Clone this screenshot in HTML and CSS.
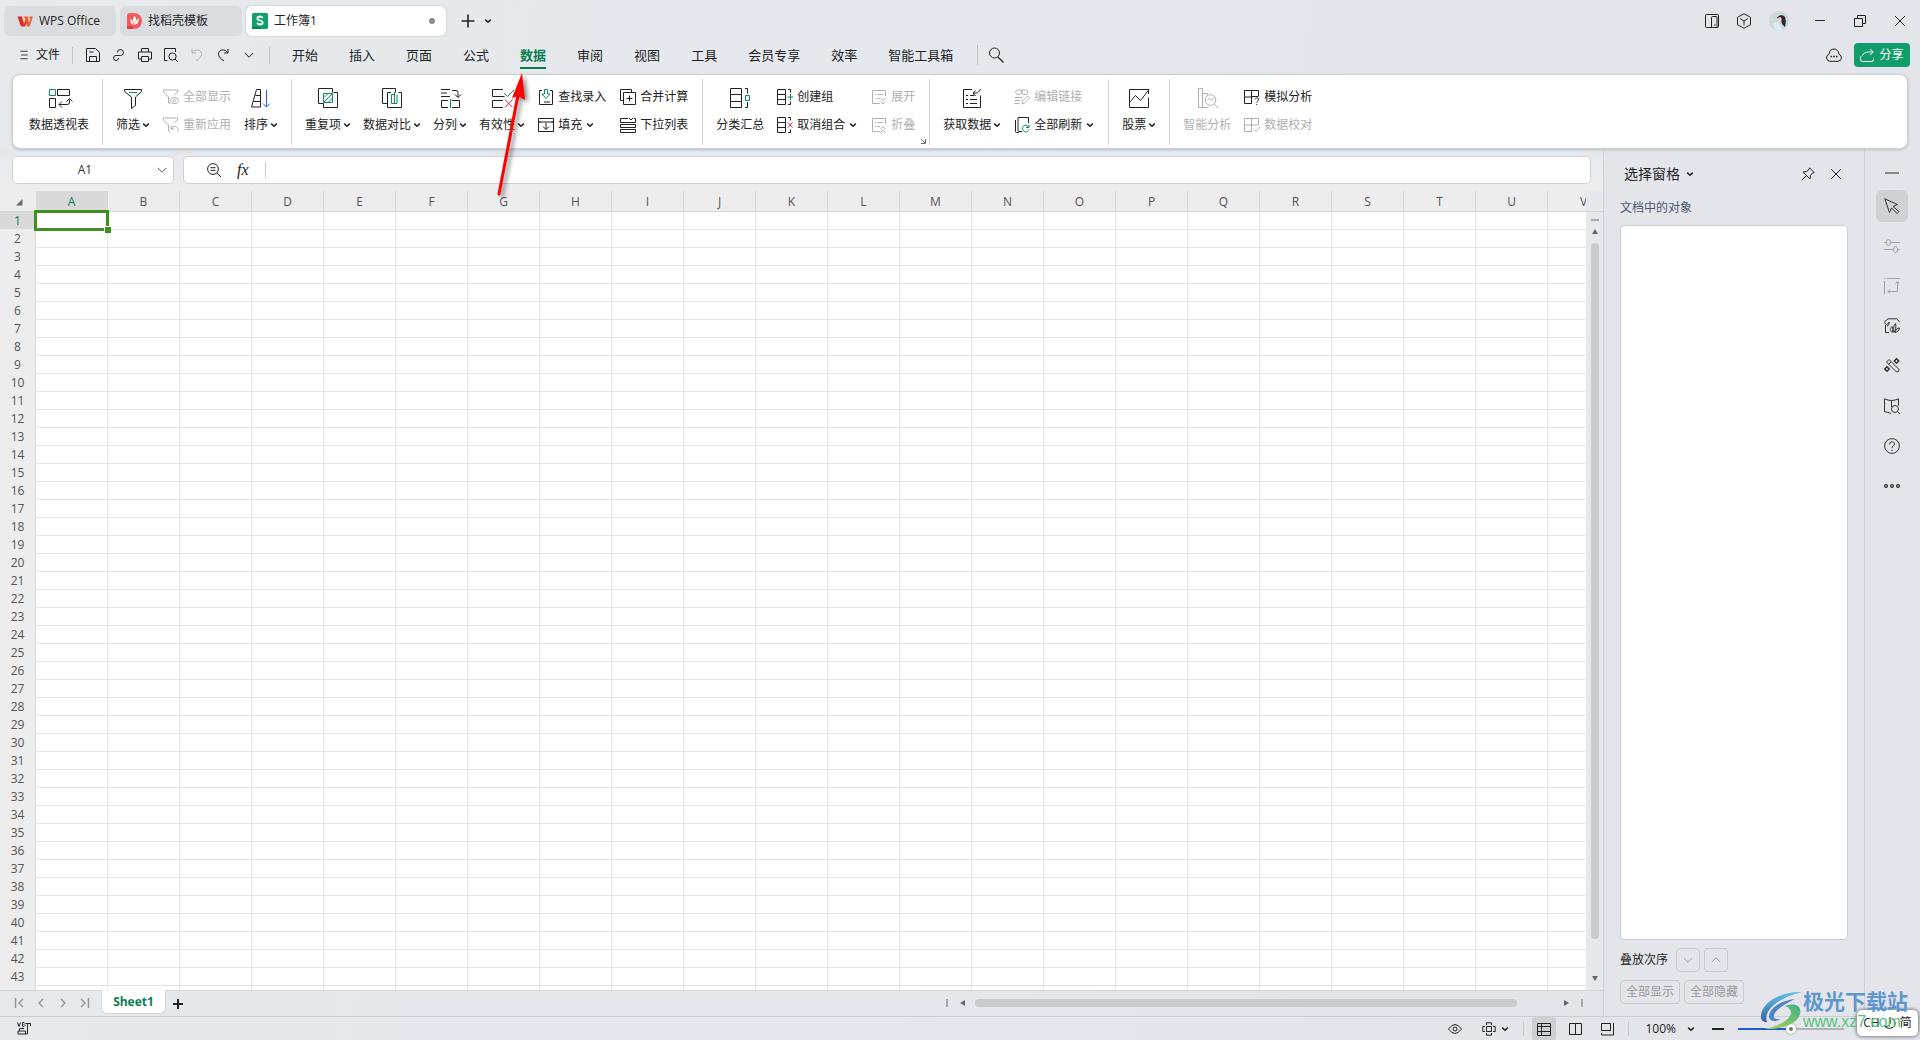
FILE: index.html
```html
<!DOCTYPE html>
<html lang="zh-CN">
<head>
<meta charset="utf-8">
<title>工作簿1 - WPS Office</title>
<link rel="stylesheet" href="styles.css">
</head>
<body>
<svg class="sprite" aria-hidden="true">
  <symbol id="chev" viewBox="0 0 8 8"><path d="M1.2 2.6 4 5.2 6.8 2.6" stroke-width="1.5"/></symbol>
  <symbol id="chev-wide" viewBox="0 0 10 10"><path d="M.8 3 5 7.2 9.2 3"/></symbol>
  <symbol id="close" viewBox="0 0 12 12"><path d="M1 1 11 11M11 1 1 11"/></symbol>
</svg>
<div class="app">
  <header class="titlebar">
    <button class="tab tab-home"><svg class="i18" viewBox="0 0 18 18"><path d="M1.500 4.500H6L8 12l2-5.500 1.500 2-2.500 6H5Z" fill="#e62a1d" stroke="none"/><path d="M7.500 4.500H12l1 6 1.500-3.500-1.500-2.500h4L13.500 14.500H11L9.500 7Z" fill="#f4592f" stroke="none"/></svg>WPS Office</button>
    <button class="tab tab-docer"><svg class="i16" viewBox="0 0 16 16"><path d="M3 0h4a8 8 0 0 1 0 16H0V3a3 3 0 0 1 3-3Z" fill="#f15b5b" stroke="none"/><path d="M0 13h6v3H0Z" fill="#d94343" stroke="none"/><path d="M7.500 3c2 1.500 2 4 0 8-2-3-2-6 0-8ZM3.500 6c2 1 3 3 3 6C4 11 3 9 3.500 6ZM11.500 5c.8 3-.5 6-4 7 .5-3 2-5 4-7Z" fill="#fff" stroke="none"/></svg>找稻壳模板</button>
    <button class="tab tab-active"><svg class="i16" viewBox="0 0 16 16"><rect width="16" height="16" rx="1.500" fill="#10a06c" stroke="none"/><path d="M0 14h8v2H0Z" fill="#0a7d52" stroke="none"/><path d="M10.600 5C10 3.900 8.900 3.500 8 3.500c-1.500 0-2.600.8-2.600 2 0 2.700 5.300 1.300 5.300 4 0 1.200-1.200 2-2.700 2-1.300 0-2.400-.6-2.800-1.700" stroke="#fff" stroke-width="1.800"/></svg>工作簿1<i class="dot"></i></button>
    <button class="ghost newtab" aria-label="新建"><svg class="i14" viewBox="0 0 14 14"><path d="M7 .5v13M.5 7h13" stroke-width="1.600"/></svg></button>
    <button class="ghost tabmore" aria-label="标签列表"><svg class="i8"><use href="#chev"/></svg></button>
    <div class="wincontrols">
      <button class="ghost" aria-label="侧边栏"><svg class="i14" viewBox="0 0 14 14"><rect x=".5" y=".5" width="13" height="13" rx="1"/><path d="M6.500 13V3.500a1 1 0 0 1 1-1H11a1 1 0 0 1 1 1V13M9 11h1.500"/></svg></button>
      <button class="ghost" aria-label="应用"><svg class="i16" viewBox="0 0 16 16"><path d="M8 .8 14.500 4.300v7.400L8 15.200 1.500 11.700V4.300ZM4 5.600 8 8l4-2.400M8 8v4.500"/></svg></button>
      <button class="ghost" aria-label="用户"><svg class="i20" viewBox="0 0 20 20"><circle cx="10" cy="10" r="10" fill="#cbdadd" stroke="none"/><path d="M8 7c1-3 6-4 8-1 1 3 1 7 0 10l-3-3-1-4-4-2Z" fill="#2c2630" stroke="none"/><path d="M9.500 6.500c2-1.500 3.500 0 3 3L10.500 12 8 10Z" fill="#edcfc6" stroke="none"/><path d="M4 12l5-1 3 3 1 5.500a9 9 0 0 1-8-2Z" fill="#dcebef" stroke="none"/></svg></button>
      <button class="ghost" aria-label="最小化"><svg class="i12" viewBox="0 0 12 12"><path d="M1 5.500h10"/></svg></button>
      <button class="ghost" aria-label="还原"><svg class="i12" viewBox="0 0 12 12"><path d="M.5 3.500h8v8h-8ZM3.500 3.500v-3h8v8h-3"/></svg></button>
      <button class="ghost" aria-label="关闭"><svg class="i12"><use href="#close"/></svg></button>
    </div>
  </header>

  <nav class="menubar">
    <button class="ghost filemenu"><svg class="i10" viewBox="0 0 10 12"><path d="M.5 1.500h9M1.500 6h8M.5 10.500h9"/></svg>文件</button>
    <div class="quick">
      <button class="ghost" aria-label="保存"><svg class="i14" viewBox="0 0 14 14"><path d="M.5.5h9l4 4v9h-13ZM3.500 13.500V8.500h7v5M3.500 4h4"/></svg></button>
      <button class="ghost" aria-label="链接"><svg class="i14" viewBox="0 0 14 14"><path d="M5.500 4.500a3 3 0 1 1 3 3H4a2.500 2.500 0 1 0 2.500 2.500"/></svg></button>
      <button class="ghost" aria-label="打印"><svg class="i14" viewBox="0 0 14 14"><path d="M3.500 4V.5h7V4M3.500 11h-3V4h13v7h-3M3.500 8.500h7v5h-7Z"/></svg></button>
      <button class="ghost" aria-label="打印预览"><svg class="i14" viewBox="0 0 14 14"><path d="M3.500 12.500h-3V.5h11V4"/><circle cx="8.500" cy="8.500" r="3.600"/><path d="M11 11l3 3"/></svg></button>
      <button class="ghost dim" aria-label="撤销"><svg class="i14" viewBox="0 0 14 14"><path d="M2 1v4h4M2 5c3-5 10-3.500 9.500 1.500C11.300 9 9 11 6 13"/></svg></button>
      <button class="ghost" aria-label="恢复"><svg class="i14" viewBox="0 0 14 14"><path d="M12 1v4H8M12 5C9 0 2 1.500 2.500 6.500 2.700 9 5 11 8 13"/></svg></button>
      <button class="ghost" aria-label="更多"><svg class="i10"><use href="#chev-wide"/></svg></button>
    </div>
    <div class="menus">
      <a href="#">开始</a><a href="#">插入</a><a href="#">页面</a><a href="#">公式</a><a href="#" class="current">数据</a><a href="#">审阅</a><a href="#">视图</a><a href="#">工具</a><a href="#">会员专享</a><a href="#">效率</a><a href="#">智能工具箱</a>
    </div>
    <button class="ghost search" aria-label="搜索"><svg class="i16" viewBox="0 0 16 16"><circle cx="6.500" cy="6" r="5"/><path d="M10 10l5.500 5.500" stroke-width="1.300"/></svg></button>
    <button class="ghost cloud" aria-label="云同步"><svg class="i16" viewBox="0 0 16 14"><path d="M4 13.300a3.600 3.600 0 0 1-1-7C3.300 2.700 5.500 1 8 1s4.700 1.700 5 5.300a3.600 3.600 0 0 1-1 7Z"/><path d="M4.500 8.500h1.600M7.200 8.500h1.600M9.900 8.500h1.600" stroke-width="1.600"/></svg></button>
    <button class="share"><svg class="i14" viewBox="0 0 14 14"><path d="M.5 8.500v3a2 2 0 0 0 2 2h9a2 2 0 0 0 2-2v-1M2 8.500c1-3.500 4-5 11-4.500M10 1l3.300 3L10 7"/></svg>分享</button>
  </nav>

  <section class="ribbon" aria-label="数据">
    <div class="group first">
      <button class="big"><svg class="i24" viewBox="0 0 24 24"><path d="M10.500 9.500v-6h12v6ZM2.500 12.500h6v9h-6ZM12 18.500h8.500a2 2 0 0 0 2-2v-3M15 15.500l-3 3 3 3M19.500 15.500l3-3 3 3"/><path class="g" d="M2.500 3.500h6v6h-6Z"/></svg><span>数据透视表</span></button>
    </div>
    <div class="group">
      <button class="big"><svg class="i24" viewBox="0 0 24 24"><path d="M3.500 3.500h17v2L14.500 11v8.500l-4 3V11L3.500 5.500Z"/><path class="g" d="M8 6.500h8" /></svg><span>筛选<svg class="i8"><use href="#chev"/></svg></span></button>
      <div class="stack">
        <button class="small dim" disabled><svg class="i16" viewBox="0 0 16 16"><path d="M.5 1v2L5.500 8v6l2 1M.5 1h14v2L11 6.500"/><ellipse cx="11.500" cy="11.500" rx="4" ry="3"/><circle cx="11.500" cy="11.500" r="1"/></svg>全部显示</button>
        <button class="small dim" disabled><svg class="i16" viewBox="0 0 16 16"><path d="M.5 1v2L5.500 8v6l2 1M.5 1h14v2L11 6.500M8 12c2-4 7-3 7 .5V15M8 8.500V12h3.500"/></svg>重新应用</button>
      </div>
      <button class="big"><svg class="i24" viewBox="0 0 24 24"><path d="M7.500 3.500h4v17.500h-9ZM6.300 9.500h5M4.500 15.500h7"/><path class="b" d="M17.500 4v17M14 17.500l3.500 3.500 3.500-3.500"/></svg><span>排序<svg class="i8"><use href="#chev"/></svg></span></button>
    </div>
    <div class="group">
      <button class="big"><svg class="i24" viewBox="0 0 24 24"><path d="M7.500 17.500h-5v-15h14v4M17.500 6.500h4v15h-14v-4"/><path class="g" d="M7.500 7.500h9v9h-9ZM8 11.500l4-4M8 16l8-8M12.500 16l4-4"/></svg><span>重复项<svg class="i8"><use href="#chev"/></svg></span></button>
      <button class="big"><svg class="i24" viewBox="0 0 24 24"><path d="M7.500 17.500h-5v-15h13v4M11 6.500H7.500v15h14v-15h-3"/><path class="g" d="M14.500 8.500h-3v9h3M14.500 6v12M17 8.500v9h-2.500"/></svg><span>数据对比<svg class="i8"><use href="#chev"/></svg></span></button>
      <button class="big"><svg class="i24" viewBox="0 0 24 24"><path d="M3 3.500h9M3 7h6M3 10.500h9M14 4.500h4a2 2 0 0 1 2 2v4.500M17 8.500l3 3 3-3M10 14.500H3.500v7H10M14 14.500h7.500v7H14"/><path class="g" d="M12.500 13v9"/></svg><span>分列<svg class="i8"><use href="#chev"/></svg></span></button>
      <button class="big"><svg class="i24" viewBox="0 0 24 24"><path d="M13 3.500H2.500v7h12M13 14.500H2.500v7H13"/><path class="g" d="M14 7l3.500 3.500L24 4"/><path class="r" d="M15 13.500l7.500 8M22.500 13.500l-7.500 8"/></svg><span>有效性<svg class="i8"><use href="#chev"/></svg></span></button>
      <div class="stack">
        <button class="small"><svg class="i16" viewBox="0 0 16 16"><path d="M4 1.500H1.500v14h13v-14H12M6 13h6"/><path class="g" d="M6.500.5h3V5h2.500L8 9.500 4 5h2.500Z"/></svg>查找录入</button>
        <button class="small"><svg class="i16" viewBox="0 0 16 16"><path d="M.5 5V1.500h15V5h-15M2.500 5H.5v9.500h15V5h-2M8 5.500v7M5 9.500l3 3 3-3"/></svg>填充<svg class="i8"><use href="#chev"/></svg></button>
      </div>
      <div class="stack">
        <button class="small"><svg class="i16" viewBox="0 0 16 16"><path d="M3 11.500H.5V.5h11V3M3.500 3.500h12v12h-12ZM9.500 6.500v6M6.500 9.500h6"/></svg>合并计算</button>
        <button class="small"><svg class="i16" viewBox="0 0 16 16"><path d="M8 1.500H.5v4h15v-4H14M9 1l2 2 2-2M.5 7.500h15v3H.5ZM.5 12.500h15v3H.5Z"/></svg>下拉列表</button>
      </div>
    </div>
    <div class="group">
      <button class="big"><svg class="i24" viewBox="0 0 24 24"><path d="M2.500 2.500h11v19h-11ZM2.500 8.500h11M2.500 15.500h11M17 2.500h2.500v5M19.500 16v5.500H17"/><path class="g" d="M17.500 9.500h4v5h-4Z"/></svg><span>分类汇总</span></button>
      <div class="stack">
        <button class="small"><svg class="i16" viewBox="0 0 16 16"><path d="M.5.5h8v15h-8ZM.5 5.500h8M.5 10.500h8M11 .5h2.500v3M13.500 12.500v3H11"/><path class="g" d="M13.500 5v6M10.500 8h5.500"/></svg>创建组</button>
        <button class="small"><svg class="i16" viewBox="0 0 16 16"><path d="M.5.5h8v15h-8ZM.5 5.500h8M.5 10.500h8M11 .5h2.500v3M13.500 12.500v3H11"/><path class="r" d="M11 5.500l4.500 5M15.500 5.500l-4.500 5"/></svg>取消组合<svg class="i8"><use href="#chev"/></svg></button>
      </div>
      <div class="stack">
        <button class="small dim" disabled><svg class="i16" viewBox="0 0 16 16"><path d="M14.500 7V1.500H1.500v13H9M4 5.500h1M6.500 5.500H12M4 9.500h1M6.500 9.500H9M9.500 9l2.500 2.500L14.500 9M9.500 12.500 12 15l2.500-2.500"/></svg>展开</button>
        <button class="small dim" disabled><svg class="i16" viewBox="0 0 16 16"><path d="M14.500 7V1.500H1.500v13H9M4 5.500h1M6.500 5.500H12M4 9.500h1M6.500 9.500H9M9.500 12l2.500-2.500 2.500 2.500M9.500 15.500 12 13l2.500 2.500"/></svg>折叠</button>
      </div>
      <button class="launcher" aria-label="分级显示设置"><svg class="i8" viewBox="0 0 8 8"><path d="M2 2l4 4M6.500 2v4.500H2"/></svg></button>
    </div>
    <div class="group">
      <button class="big"><svg class="i24" viewBox="0 0 24 24"><path d="M12 3.500H3.500v18h17v-12M6 9.500h2M10 9.500h4M6 13.500h2M10 13.500h7M6 17.500h2M10 17.500h7M13 7h3c2 0 3-1 4.500-4M15.500 4.500 13 7l2.500 3"/></svg><span>获取数据<svg class="i8"><use href="#chev"/></svg></span></button>
      <div class="stack">
        <button class="small dim" disabled><svg class="i16" viewBox="0 0 16 16"><path d="M6 5.500H3.500a2.300 2.300 0 0 1 0-4.500H6a2 2 0 0 1 1 4M9 5.500h3a2.300 2.300 0 0 0 0-4.500H9.500a2 2 0 0 0-1 4M.5 8.500h8M.5 11.500h6M.5 14.500h5M8 15l.5-3L13.500 7l2 2-5 5Z"/></svg>编辑链接</button>
        <button class="small"><svg class="i16" viewBox="0 0 16 16"><path d="M8 14.500H5a1 1 0 0 1-1-1V.5h10.500V6M1.500 3v11.500a1 1 0 0 0 1 1H5"/><path class="g" d="M14.500 10c-1.500-3-6-2-6 1.500 0 4 5.500 4.500 6.500 1M15 7.500v3h-3"/></svg>全部刷新<svg class="i8"><use href="#chev"/></svg></button>
      </div>
    </div>
    <div class="group">
      <button class="big"><svg class="i24" viewBox="0 0 24 24"><path d="M17 3.500H2.500v18h19v-10M2.500 16.500l6-7 5 5 8.500-11M17 3.500h4.500V8"/></svg><span>股票<svg class="i8"><use href="#chev"/></svg></span></button>
    </div>
    <div class="group last">
      <button class="big dim" disabled><svg class="i24" viewBox="0 0 24 24"><path d="M3.500 2.500h4v19h-4ZM7.500 7.500h5M7.500 21.500h6M12.500 7.500v2"/><circle cx="15.500" cy="14" r="5.300"/><path d="M19.500 18l3.500 4M12 14.500l2-2 2 2 3-2.500"/></svg><span>智能分析</span></button>
      <div class="stack">
        <button class="small"><svg class="i16" viewBox="0 0 16 16"><path d="M8 14.500H.5V1.500h14V7M.5 8h8M7.500 1.500v13M7.500 7.500h7M11 10.500c.5-2 3.500-2 3.500 0 0 1.500-1.800 1.500-1.800 3M12.700 15v1"/></svg>模拟分析</button>
        <button class="small dim" disabled><svg class="i16" viewBox="0 0 16 16"><path d="M8 14.500H.5V1.500h14V8M.5 8h14M7.500 1.500v13M9.500 12l2.500 2.500 4-4.500"/></svg>数据校对</button>
      </div>
    </div>
  </section>

  <main class="workspace">
    <section class="sheet">
      <div class="formulabar">
        <div class="namebox"><input type="text" value="A1" aria-label="名称框"><button class="ghost" aria-label="名称列表"><svg class="i10"><use href="#chev-wide"/></svg></button></div>
        <div class="formula">
          <button class="ghost" aria-label="查找"><svg class="i14" viewBox="0 0 14 14"><circle cx="6" cy="6" r="5.400"/><path d="M3.500 4.700h5M3.500 7.300h5M10 10l4 4"/></svg></button>
          <button class="ghost fx">fx</button>
          <input type="text" aria-label="编辑栏">
        </div>
      </div>
      <div class="gridwrap">
        <div class="gridclip">
          <table class="grid"><thead><tr id="cols"><th class="corner" aria-label="全选"><svg class="i8" viewBox="0 0 8 8"><path d="M7.500 1v6.500H1Z" fill="#6a6a6a" stroke="none"/></svg></th></tr></thead><tbody id="rows"></tbody></table>
        </div>
        <div class="vscroll">
          <span class="splitbar"></span><span class="tri up"></span><span class="vthumb"></span><span class="tri down"></span>
        </div>
      </div>
      <div class="sheetbar">
        <div class="sheetnav">
          <button class="ghost" aria-label="首个"><svg class="i10" viewBox="0 0 10 10"><path d="M1.500 0v10M9 1 5 5l4 4"/></svg></button>
          <button class="ghost" aria-label="上一个"><svg class="i10" viewBox="0 0 10 10"><path d="M7 1 3 5l4 4"/></svg></button>
          <button class="ghost" aria-label="下一个"><svg class="i10" viewBox="0 0 10 10"><path d="M3 1l4 4-4 4"/></svg></button>
          <button class="ghost" aria-label="末个"><svg class="i10" viewBox="0 0 10 10"><path d="M1 1l4 4-4 4M8.500 0v10"/></svg></button>
        </div>
        <button class="sheettab">Sheet1</button>
        <button class="ghost addsheet" aria-label="新建工作表"><svg class="i10" viewBox="0 0 10 10"><path d="M5 0v10M0 5h10" stroke-width="2"/></svg></button>
        <div class="hscroll"><span class="bar"></span><span class="tri left"></span><span class="htrack"><span class="hthumb"></span></span><span class="tri right"></span><span class="bar"></span></div>
      </div>
    </section>

    <aside class="panel">
      <header class="panelhead"><h2>选择窗格</h2><svg class="i8"><use href="#chev"/></svg>
        <button class="ghost pin" aria-label="固定"><svg class="i14" viewBox="0 0 14 14"><path d="M8.500.8 13.200 5.500 11.500 6l-2 2.500-.5 3.500L2 5l3.500-.5L8 2.500ZM5 9 .8 13.200"/></svg></button>
        <button class="ghost" aria-label="关闭窗格"><svg class="i12"><use href="#close"/></svg></button>
      </header>
      <p class="sub">文档中的对象</p>
      <div class="objects"></div>
      <div class="order"><span>叠放次序</span><button class="outline sq" aria-label="下移"><svg class="i10"><use href="#chev-wide"/></svg></button><button class="outline sq flip" aria-label="上移"><svg class="i10"><use href="#chev-wide"/></svg></button></div>
      <div class="showhide"><button class="outline">全部显示</button><button class="outline">全部隐藏</button></div>
    </aside>

    <aside class="rail">
      <span class="raildash"></span>
      <button class="railbtn on" aria-label="选择"><svg class="i16" viewBox="0 0 16 16"><path d="M.8.8 13.500 6.500 9 8.500l6 5-2 2-5.500-5.500-2 4.500Z"/></svg></button>
      <button class="railbtn dim" aria-label="属性"><svg class="i16" viewBox="0 0 16 16"><path d="M0 4.500h2.500M6.500 4.500H16M0 11.500h9.500M13.500 11.500H16"/><ellipse cx="4.500" cy="4.500" rx="2" ry="3"/><ellipse cx="11.500" cy="11.500" rx="2" ry="3"/></svg></button>
      <button class="railbtn dim" aria-label="透视"><svg class="i16" viewBox="0 0 16 16"><path d="M3 .5h13M.5 3v13M0 .5h1.500M13.500 3.500v10H4M11.500 5.500l2-2 2 2M6 11.500l-2 2 2 2"/></svg></button>
      <button class="railbtn" aria-label="稻壳"><svg class="i16" viewBox="0 0 16 16"><path d="M5 14.500H1.500V7M15.500 4 13 .8H4L.8 3.500c-.5 3.500 3.500 4 4.200.5M5 4c.5 2-.5 4-2 4M8 14.500c-3-3-1-5 0-6 1 2 1 4 0 6ZM10 14.500c-1-4 0-8 1.500-9 1 3 0 7-1.500 9ZM11 14.500c1-3 2-4.500 4.500-4.500-.5 3-2 4-4.500 4.500Z"/></svg></button>
      <button class="railbtn" aria-label="工具"><svg class="i16" viewBox="0 0 16 16"><path d="M2.500 4 5 1.500 15 11.500q0 3-2.500 2.500ZM4.500 6.500l2.500-2.500"/><path d="M12.500.8 14.700 3l-2.200 2.200L10.300 3ZM3 8.800 5.200 11 3 13.200.8 11Z" stroke-width="1.500"/></svg></button>
      <button class="railbtn" aria-label="查阅"><svg class="i16" viewBox="0 0 16 16"><path d="M7.500 2.500Q4 2.500.5.800v13Q4 14 7 15.500M7.500 9V2.500Q11 2.500 14.500.8V7.500"/><circle cx="11" cy="11" r="3.500"/><path d="M13.500 13.500 16 16"/></svg></button>
      <button class="railbtn" aria-label="帮助"><svg class="i16" viewBox="0 0 16 16"><circle cx="8" cy="8" r="7.400"/><path d="M5.500 6.500C5.500 3 10.500 3 10.500 6c0 2-2.500 1.800-2.500 4M8 11.500V13"/></svg></button>
      <button class="railbtn" aria-label="更多"><svg class="i16" viewBox="0 0 16 16"><g stroke-width="1.300"><circle cx="2" cy="8" r="1.400"/><circle cx="8" cy="8" r="1.400"/><circle cx="14" cy="8" r="1.400"/></g></svg></button>
    </aside>
  </main>

  <footer class="status">
    <button class="ghost macro" aria-label="宏"><svg class="i14" viewBox="0 0 14 14"><path d="M.5.500 2 4.500 3.500.5M5.500.5v4H7L8 3.500 7 2.500l1-1-1-1ZM9 1.500h4.500V4M10.500 1.500v10.500H1V9h7.500v3M2.500 9V6.500H7"/></svg></button>
    <div class="statusright">
      <button class="ghost eye" aria-label="护眼"><svg class="i14" viewBox="0 0 14 14"><path d="M.5 7Q7-2 13.500 7 7 16 .5 7Z"/><circle cx="7" cy="7" r="2"/></svg></button>
      <button class="ghost cross" aria-label="阅读模式"><svg class="i14" viewBox="0 0 14 14"><path d="M4.500 4.500h5v5h-5ZM4.500 3V.8h5V3M4.500 11v2.200h5V11M3 4.500H.8v5H3M11 4.500h2.200v5H11"/></svg><svg class="i8"><use href="#chev"/></svg></button>
      <span class="vsep"></span>
      <button class="ghost view on" aria-label="普通视图"><svg class="i14" viewBox="0 0 14 14"><path d="M.5 1.500h13v12H.5ZM.5 4.500h13M.5 9.500h13M4.500 1.500v12"/></svg></button>
      <button class="ghost view" aria-label="分页预览"><svg class="i14" viewBox="0 0 14 14"><path d="M.5 1.500h12v11H.5ZM6.500 1.500v11"/></svg></button>
      <button class="ghost view" aria-label="页面布局"><svg class="i14" viewBox="0 0 14 14"><path d="M.5 1.500h9v7h-9ZM12.500 1v12M.5 11v2h12"/></svg></button>
      <span class="vsep"></span>
      <button class="ghost zoomlevel">100%<svg class="i8"><use href="#chev"/></svg></button>
      <button class="ghost minus" aria-label="缩小"><svg class="i12" viewBox="0 0 12 12"><path d="M0 6h12" stroke-width="2"/></svg></button>
      <input class="slider" type="range" min="0" max="200" value="100" aria-label="缩放">
    </div>
  </footer>

  <svg class="arrow" viewBox="0 0 40 130" aria-hidden="true"><path d="M9 123 28 24" stroke="#f00" stroke-width="3" stroke-linecap="round"/><path d="M32 2 22 27l6-2 7 4Z" fill="#f00" stroke="none"/></svg>
  <div class="ime"><span>CH</span><svg class="i12" viewBox="0 0 12 12"><path d="M5.500.8C12 2 13 9 8 10.800 5 12 2 11 .8 9.500 5 10 8 6 5.500.8Z"/></svg><span>简</span></div>
  <div class="mark">
    <svg class="swoosh" viewBox="0 0 44 40" aria-hidden="true"><defs><linearGradient id="mg" x1="0" y1="0" x2="0" y2="1"><stop offset="0" stop-color="#5fc0e8"/><stop offset="1" stop-color="#3a62a8"/></linearGradient><linearGradient id="mh" x1="1" y1="0" x2="0" y2="1"><stop offset="0" stop-color="#3fae8c"/><stop offset="1" stop-color="#b4d84a"/></linearGradient></defs><path d="M43 1C22 0 4 11 2 24c-1 5 3 8 6 7C4 20 18 7 43 1Z" fill="url(#mg)" stroke="none"/><path d="M36 8C20 10 10 18 10 26c1 5 7 5 12 2-6 1-8-1-7-4C17 18 26 13 36 8Z" fill="#4d84c0" stroke="none"/><path d="M26 15c10-4 17 0 15 8C39 32 24 39 5 38c15-3 26-9 27-16 0-4-3-6-6-7Z" fill="url(#mh)" stroke="none"/></svg>
    <div class="marktext"><b>极光下载站</b><em>www.xz7.com</em></div>
  </div>
</div>
<script src="grid.js"></script>
</body>
</html>
```
FILE: styles.css
```css
* { box-sizing: border-box; }
body { margin: 0; font: 12px/16px "Open Sans", "Noto Sans CJK SC", sans-serif; color: #222; }
button, input { font: inherit; color: inherit; margin: 0; padding: 0; border: 0; background: none; }
button { cursor: default; white-space: nowrap; }
svg { display: block; flex: none; fill: none; stroke: currentColor; overflow: visible; }
.sprite { position: absolute; width: 0; height: 0; }
.i8 { width: 8px; height: 8px; }
.i10 { width: 10px; height: 10px; }
.i12 { width: 12px; height: 12px; }
.i14 { width: 14px; height: 14px; }
.i16 { width: 16px; height: 16px; }
.i18 { width: 18px; height: 18px; }
.i20 { width: 20px; height: 20px; }
.i24 { width: 24px; height: 24px; }
.g { stroke: #0d8a5f; }
.b { stroke: #2257e0; }
.r { stroke: #d02a55; }
.dim { color: #b0b0b0; }
.ghost { display: flex; align-items: center; justify-content: center; }

.app { position: relative; display: flex; flex-direction: column; height: 100vh; overflow: hidden; background: linear-gradient(100deg, #e6eaec, #e5e8ed 50%, #e4e5eb 75%); }

.titlebar { display: flex; align-items: center; height: 40px; padding: 2px 14px 0 4px; gap: 4px; }
.tab { display: flex; align-items: center; gap: 6px; height: 30px; border-radius: 6px; background: #dadddf; text-align: left; }
.tab-home { width: 112px; padding-left: 12px; gap: 5px; }
.tab-docer { width: 122px; padding-left: 7px; gap: 5px; }
.tab-active { width: 200px; padding: 0 11px 0 6px; background: #fff; box-shadow: 0 0 2px #b4b8bb; }
.dot { width: 6px; height: 6px; margin-left: auto; border-radius: 50%; background: #8c8c8c; }
.newtab { margin-left: 11px; }
.tabmore { margin-left: 5px; }
.wincontrols { display: flex; align-items: center; gap: 17px; margin-left: auto; }
.wincontrols button:nth-child(4) { margin-left: 8px; }
.wincontrols button:nth-child(n+5) { margin-left: 11px; }

.menubar { display: flex; align-items: center; height: 35px; padding: 0 10px 5px 19px; }
.filemenu { gap: 7px; padding-right: 12px; }
.quick { display: flex; align-items: center; gap: 12px; height: 17px; padding: 0 15px 0 13px; border: solid #c3c6c9; border-width: 0 1px; }
.quick button:last-child { margin-left: 2px; }
.menus { display: flex; gap: 31px; margin-left: 22px; padding-right: 24px; font-size: 13px; line-height: 18px; }
.menus a { position: relative; color: inherit; text-decoration: none; white-space: nowrap; }
.menus .current { color: #0b7d53; font-weight: 700; }
.menus .current::after { content: ""; position: absolute; left: 0; right: 0; bottom: -5px; height: 2px; background: #0b7d53; }
.search { height: 20px; padding-left: 10px; border-left: 1px solid #c3c6c9; }
.cloud { margin-left: auto; }
.share { display: flex; align-items: center; justify-content: center; gap: 5px; width: 56px; height: 24px; margin-left: 12px; border-radius: 4px; background: #109c6b; color: #fff; }

.ribbon { display: flex; height: 75px; margin: -1px 12px 0; padding-top: 4px; border: 1px solid #ccd0d3; border-radius: 8px; background: #fff; box-shadow: 0 1px 3px #b9bdc1; z-index: 1; flex: none; }
.group { position: relative; display: flex; align-items: flex-start; gap: 12px; height: 66px; padding: 7px 13px 0; border-right: 1px solid #d4d4d4; }
.group.first { padding-left: 16px; }
.group.last { border-right: 0; }
.big { display: flex; flex-direction: column; align-items: center; gap: 7px; }
.big span { display: flex; align-items: center; gap: 2px; }
.stack { display: flex; flex-direction: column; gap: 12px; padding: 3px 1px 0; }
.small { display: flex; align-items: center; gap: 4px; height: 16px; }
.launcher { position: absolute; right: 2px; bottom: 0; color: #666; }

.workspace { display: flex; flex: 1; min-height: 0; }
.sheet { display: flex; flex-direction: column; flex: 1; min-width: 0; }
.formulabar { display: flex; gap: 9px; height: 42px; padding: 7px 12px 7px 12px; background: linear-gradient(#e5e8eb, #ededed); flex: none; }
.namebox, .formula { display: flex; align-items: center; height: 28px; border: 1px solid #d0d3d5; border-radius: 5px; background: #fff; }
.namebox { width: 162px; padding-right: 6px; color: #555; }
.namebox input { flex: 1; min-width: 0; text-align: center; color: #333; }
.formula { flex: 1; gap: 16px; padding: 0 8px 0 23px; }
.fx { font: italic 16px/20px "Liberation Serif", serif; }
.formula input { flex: 1; min-width: 0; height: 16px; padding-left: 8px; border-left: 1px solid #ccc; }

.gridwrap { display: flex; flex: 1; min-height: 0; background: #e6e8ec; }
.gridclip { flex: 1; min-width: 0; overflow: hidden; background: #fff; }
.grid { table-layout: fixed; width: 1620px; border-collapse: separate; border-spacing: 0; color: #555; }
.grid th { padding: 0; background: #ededed; font-weight: 400; border: solid #d6d6d6; border-width: 0 1px 1px 0; text-align: center; overflow: hidden; }
.grid thead th { height: 21px; width: 72px; padding-top: 2px; line-height: 18px; }
.grid thead .corner { width: 36px; border-width: 0 0 1px; }
.corner svg { margin-left: 15px; }
.grid tbody th { height: 18px; line-height: 17px; border-bottom-color: #ededed; }
.grid td { height: 18px; padding: 0; border: solid #e4e4e4; border-width: 0 1px 1px 0; }
.grid .sel { background: #d9d9d9; color: #0b7d53; }
.active { position: relative; }
.cursor { position: absolute; inset: -2px; border: 3px solid #41901f; z-index: 1; }
.cursor::after { content: ""; position: absolute; right: -5px; bottom: -5px; width: 6px; height: 6px; background: #41901f; border: solid #fff; border-width: 1px 0 0 1px; }
.vscroll { display: flex; flex-direction: column; align-items: center; width: 17px; margin-top: 20px; padding: 7px 0 9px; border-top: 1px solid #d6d6d6; }
.splitbar { width: 8px; height: 2px; background: #aaa; }
.tri { width: 0; height: 0; border: 3px solid transparent; flex: none; }
.up { margin: 8px 0 9px; border-width: 0 3px 5px; border-bottom-color: #666; }
.down { margin-top: 37px; border-width: 5px 3px 0; border-top-color: #666; }
.left { border-width: 3px 5px 3px 0; border-right-color: #666; }
.right { border-width: 3px 0 3px 5px; border-left-color: #666; }
.vthumb { flex: 1; width: 8px; border-radius: 4px; background: #cacbce; }

.sheetbar { display: flex; align-items: flex-start; height: 26px; border-top: 1px solid #d3d5d7; flex: none; }
.sheetnav { display: flex; align-items: center; gap: 12px; height: 24px; padding: 0 11px 0 14px; color: #999; }
.sheetnav path { stroke-width: 1.5; }
.sheettab { width: 65px; height: 24px; margin-top: -1px; border: 1px solid #d3d5d7; border-top: 0; border-radius: 0 0 6px 6px; background: #fff; color: #0b7d53; font-weight: 700; }
.addsheet { width: 24px; height: 25px; }
.hscroll { display: flex; align-items: center; width: 637px; height: 23px; margin: 0 20px 0 auto; }
.bar { width: 2px; height: 8px; background: #aaa; }
.left { margin: 0 10px 0 12px; }
.htrack { flex: 1; }
.hthumb { display: block; width: 92%; height: 8px; border-radius: 4px; background: #cacbce; }
.right { margin-right: 12px; }

.panel { display: flex; flex-direction: column; width: 261px; padding: 0 16px 12px; border-left: 1px solid #cdd0d6; }
.panelhead { display: flex; align-items: center; height: 50px; padding-left: 4px; }
.panelhead h2 { margin: 0 6px 0 0; font-size: 14px; line-height: 20px; font-weight: 400; }
.pin { margin: 0 15px 0 auto; }
.panelhead button:last-child { margin-right: 6px; }
.sub { margin: 1px 0 9px; color: #4d5670; }
.objects { flex: 1; border: 1px solid #c9cdd6; border-radius: 4px; background: #fff; }
.order { display: flex; align-items: center; gap: 4px; margin-top: 8px; }
.order span { margin-right: 4px; }
.outline { height: 24px; padding: 0 5px; border: 1px solid #c9ccd2; border-radius: 4px; color: #999; }
.sq { display: flex; align-items: center; justify-content: center; width: 24px; }
.flip svg { transform: rotate(180deg); }
.showhide { display: flex; gap: 4px; margin-top: 8px; }

.rail { display: flex; flex-direction: column; align-items: center; gap: 8px; width: 56px; padding: 23px 1px 0 0; border-left: 1px solid #cdd0d6; color: #333; }
.raildash { width: 14px; height: 2px; margin-bottom: 8px; background: #888; }
.railbtn { display: flex; align-items: center; justify-content: center; width: 32px; height: 32px; border-radius: 6px; flex: none; }
.railbtn.dim { color: #a0a1a6; }
.railbtn.on { background: #d0d1d5; }

.status { display: flex; align-items: center; height: 24px; padding: 0 76px 0 17px; border-top: 1px solid #cbced1; flex: none; }
.statusright { display: flex; align-items: center; margin-left: auto; }
.cross { gap: 5px; margin: 0 14px 0 20px; }
.vsep { width: 1px; height: 14px; background: #c3c6c9; }
.view { width: 24px; height: 24px; margin-left: 8px; border-radius: 4px; }
.view.on { background: #cdd0d3; }
.view + .vsep { margin-left: 8px; }
.zoomlevel { gap: 11px; margin: 0 17px 0 16px; }
.minus { margin-right: 14px; }
.slider { width: 106px; height: 12px; appearance: none; }
.slider::-webkit-slider-runnable-track { height: 2px; background: linear-gradient(90deg, #2257e0 50%, #b0b2b6 50%); }
.slider::-webkit-slider-thumb { appearance: none; width: 10px; height: 10px; margin-top: -4px; border: 3px solid #fff; border-radius: 50%; background: #777; box-shadow: 0 0 2px #777; }

.arrow { position: absolute; left: 490px; top: 71px; width: 40px; height: 130px; z-index: 5; filter: drop-shadow(3px 2px 2px #0007); }
.ime { position: absolute; right: 2px; bottom: 4px; display: flex; align-items: center; justify-content: center; gap: 4px; width: 61px; height: 26px; border-radius: 5px; background: #fff; box-shadow: 0 0 4px #444; white-space: nowrap; z-index: 5; }
.mark { position: absolute; right: 11px; bottom: 8px; display: flex; align-items: center; z-index: 6; }
.swoosh { width: 44px; height: 40px; }
.marktext { display: flex; flex-direction: column; width: 106px; white-space: nowrap; }
.marktext b { font-size: 21px; line-height: 22px; color: #5c97d2; }
.marktext em { font: 16px/20px "Liberation Sans", sans-serif; color: #54c67c; }
```
FILE: grid.js
```js
const cols = document.getElementById('cols');
const rows = document.getElementById('rows');
const letters = 'ABCDEFGHIJKLMNOPQRSTUV'.split('');

letters.forEach((letter, i) => {
  const th = document.createElement('th');
  th.textContent = letter;
  if (i === 0) th.className = 'sel';
  cols.append(th);
});

for (let r = 1; r <= 43; r++) {
  const tr = document.createElement('tr');
  const head = document.createElement('th');
  head.textContent = r;
  if (r === 1) head.className = 'sel';
  tr.append(head);
  letters.forEach((_, c) => {
    const td = document.createElement('td');
    if (r === 1 && c === 0) {
      td.className = 'active';
      td.innerHTML = '<span class="cursor"></span>';
    }
    tr.append(td);
  });
  rows.append(tr);
}
const last = document.createElement('tr');
last.innerHTML = '<th></th>' + '<td></td>'.repeat(letters.length);
rows.append(last);
```
